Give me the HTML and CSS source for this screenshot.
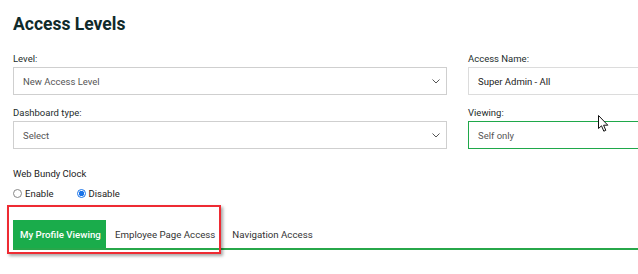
FILE: index.html
```html
<!DOCTYPE html>
<html>
<head>
<meta charset="utf-8">
<link rel="stylesheet" href="styles.css">
</head>
<body>
<div class="page">
  <h1 class="title">Access Levels</h1>
  <div class="grid">
    <div class="field">
      <label class="label">Level:</label>
      <div class="box select">New Access Level
        <svg class="chev" width="8" height="5" viewBox="0 0 8 5"><path d="M0.5 0.5 L4 4 L7.5 0.5" fill="none" stroke="#555" stroke-width="1"/></svg>
      </div>
    </div>
    <div class="field">
      <label class="label">Access Name:</label>
      <div class="box dark">Super Admin - All</div>
    </div>
    <div class="field">
      <label class="label">Dashboard type:</label>
      <div class="box select">Select
        <svg class="chev" width="8" height="5" viewBox="0 0 8 5"><path d="M0.5 0.5 L4 4 L7.5 0.5" fill="none" stroke="#555" stroke-width="1"/></svg>
      </div>
    </div>
    <div class="field">
      <label class="label">Viewing:</label>
      <div class="box green">Self only</div>
    </div>
  </div>
  <div class="bundy">
    <div class="label plain">Web Bundy Clock</div>
    <div class="radios">
      <span class="radio"><span class="dot"></span>Enable</span>
      <span class="radio"><span class="dot on"></span>Disable</span>
    </div>
  </div>
  <div class="tabs">
    <div class="tab active">My Profile Viewing</div>
    <div class="tab">Employee Page Access</div>
    <div class="tab">Navigation Access</div>
    <div class="highlight"></div>
  </div>
  <svg class="cursor" width="12" height="18" viewBox="0 0 12 18"><path d="M0.5 0.5 L0.5 13.5 L3.5 10.8 L5.8 16.2 L7.8 15.3 L5.6 10.2 L9.8 10.2 Z" fill="#fff" stroke="#111" stroke-width="1" stroke-linejoin="round"/></svg>
</div>
</body>
</html>
```

FILE: styles.css
```css
html, body {
  margin: 0;
  padding: 0;
  background: #fff;
  overflow: hidden;
}
.page {
  position: relative;
  width: 638px;
  height: 274px;
  overflow: hidden;
  padding-left: 13px;
  box-sizing: border-box;
  font-family: "Roboto", "Liberation Sans", sans-serif;
  color: #333;
}
.title {
  margin: 0;
  padding-top: 13px;
  font-size: 17.5px;
  font-weight: 700;
  color: #0f2a2a;
  line-height: 22px;
  height: 22px;
}
.grid {
  display: grid;
  grid-template-columns: 434px 434px;
  column-gap: 21px;
  row-gap: 12px;
  margin-top: 18px;
}
.field {
  display: flex;
  flex-direction: column;
}
.label {
  font-size: 9.5px;
  line-height: 12px;
  color: #1d2d2d;
  margin-bottom: 2px;
  height: 12px;
}
.box {
  position: relative;
  height: 28px;
  box-sizing: border-box;
  border: 1px solid #cfcfcf;
  padding: 0 0 0 9px;
  display: flex;
  align-items: center;
  font-size: 9.5px;
  color: #555;
}
.box.dark {
  color: #222;
  border-color: #dcdcdc;
}
.box.green {
  border-color: #1fa84a;
  color: #555;
}
.chev {
  position: absolute;
  right: 6px;
  top: 11px;
}
.bundy {
  margin-top: 19px;
}
.label.plain {
  font-size: 9.5px;
  color: #222;
  margin-bottom: 7px;
}
.radios {
  display: flex;
  gap: 23px;
  font-size: 9.5px;
  color: #222;
  height: 12px;
  align-items: center;
}
.radio {
  display: flex;
  align-items: center;
}
.dot {
  width: 7px;
  height: 7px;
  border: 1px solid #888;
  border-radius: 50%;
  margin-right: 3px;
  box-sizing: content-box;
}
.dot.on {
  border-color: #1a73e8;
  background: radial-gradient(circle, #1a73e8 0 2.5px, #fff 3px);
}
.tabs {
  position: relative;
  display: flex;
  margin-top: 21px;
  height: 28px;
  border-bottom: 2px solid #27a74a;
  margin-right: -13px;
}
.tab {
  padding: 0 8px 0 9px;
  display: flex;
  align-items: center;
  font-size: 9.7px;
  color: #333;
  height: 28px;
  white-space: nowrap;
}
.tab:nth-child(3) {
  padding-left: 9px;
}
.tab.active {
  background: #1aac4b;
  color: #fff;
  font-weight: 500;
  width: 93px;
  box-sizing: border-box;
  padding: 0 0 0 7px;
}
.highlight {
  position: absolute;
  left: -6px;
  top: -15px;
  width: 214px;
  height: 49px;
  box-sizing: border-box;
  border: 2px solid #ee2b33;
  box-shadow: 2px 2px 3px rgba(0,0,0,0.35);
}
.cursor {
  position: absolute;
  left: 598px;
  top: 115px;
}
```
